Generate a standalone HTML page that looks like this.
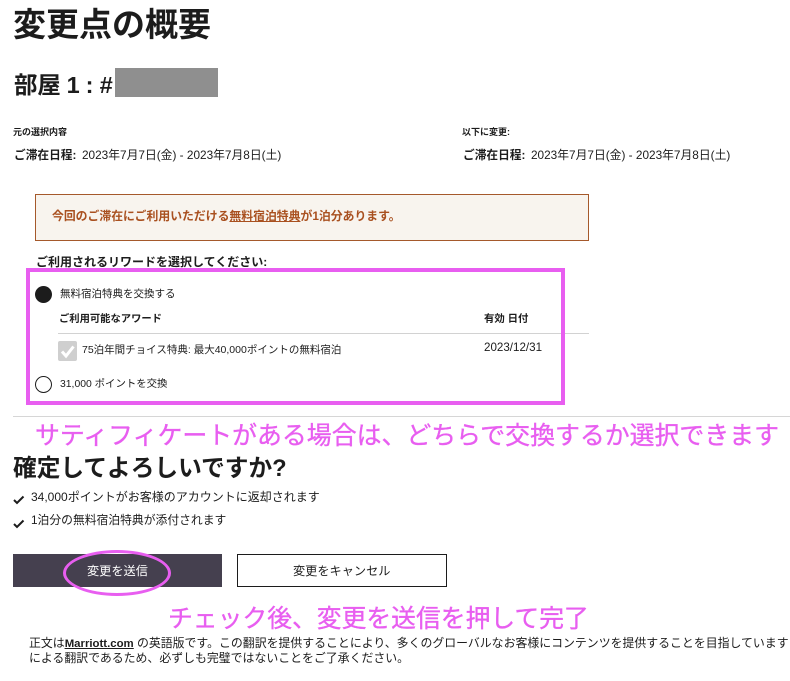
<!DOCTYPE html>
<html lang="ja">
<head>
<meta charset="utf-8">
<title>変更点の概要</title>
<style>
html,body{margin:0;padding:0;background:#fff}
body{position:relative;width:790px;height:681px;overflow:hidden;font-family:"Liberation Sans","Noto Sans CJK JP",sans-serif;color:#1c1c1c}
.t{position:absolute;white-space:nowrap;line-height:1;margin:0;font-weight:400}
.b{font-weight:700}
.box{position:absolute;box-sizing:border-box}
.pink{color:#e85ef0;-webkit-text-stroke:.35px #e85ef0}
a{color:inherit}
</style>
</head>
<body>
<h1 class="t b" style="left:13px;top:8px;font-size:33px">変更点の概要</h1>
<h2 class="t b" style="left:14px;top:74px;font-size:23.5px;letter-spacing:-.3px">部屋 1 : <i>#</i></h2>
<div class="box" style="left:115px;top:68px;width:103px;height:29px;background:#8f8f8f"></div>

<div class="t b" style="left:13px;top:128px;font-size:9px">元の選択内容</div>
<div class="t b" style="left:14px;top:150px;font-size:11.7px">ご滞在日程:</div>
<div class="t" style="left:82px;top:150px;font-size:11.8px">2023年7月7日(金) - 2023年7月8日(土)</div>
<div class="t b" style="left:462px;top:128px;font-size:9px">以下に変更:</div>
<div class="t b" style="left:463px;top:150px;font-size:11.7px">ご滞在日程:</div>
<div class="t" style="left:531px;top:150px;font-size:11.8px">2023年7月7日(金) - 2023年7月8日(土)</div>

<div class="box" style="left:35px;top:194px;width:554px;height:47px;background:#f8f4ee;border:1px solid #a5592b"></div>
<div class="t b" style="left:52px;top:211px;font-size:11.85px;color:#a9501f">今回のご滞在にご利用いただける<u>無料宿泊特典</u>が1泊分あります。</div>

<div class="t b" style="left:36px;top:256px;font-size:12px">ご利用されるリワードを選択してください:</div>

<div class="box" style="left:58px;top:333px;width:531px;height:1px;background:#d2d2d2"></div>
<div class="box" style="left:26px;top:268px;width:539px;height:137px;border:4px solid #e85ef0"></div>

<div class="box" style="left:35px;top:286px;width:17px;height:17px;border-radius:50%;background:#1c1c1c"></div>
<div class="t" style="left:60px;top:289px;font-size:10.5px">無料宿泊特典を交換する</div>
<div class="t b" style="left:59px;top:315px;font-size:10.3px">ご利用可能なアワード</div>
<div class="t b" style="left:484px;top:315px;font-size:10.4px">有効 日付</div>

<div class="box" style="left:58px;top:341px;width:19px;height:20px;border-radius:2px;background:#cfcfcf"></div>
<svg class="box" style="left:58px;top:341px" width="19" height="20" viewBox="0 0 19 20"><path d="M4 10.5 8 15 15.5 5.5" fill="none" stroke="#fff" stroke-width="3"/></svg>
<div class="t" style="left:82px;top:345px;font-size:10.5px">75泊年間チョイス特典: 最大40,000ポイントの無料宿泊</div>
<div class="t" style="left:484px;top:342px;font-size:11.6px">2023/12/31</div>

<div class="box" style="left:35px;top:376px;width:17px;height:17px;border-radius:50%;background:#fff;border:1.3px solid #1c1c1c"></div>
<div class="t" style="left:60px;top:380px;font-size:10.4px">31,000 ポイントを交換</div>

<div class="box" style="left:13px;top:416px;width:777px;height:1px;background:#d6d6d6"></div>

<div class="t pink" style="left:35px;top:424px;font-size:24.9px">サティフィケートがある場合は、どちらで交換するか選択できます</div>

<div class="t b" style="left:13px;top:458px;font-size:23.7px">確定してよろしいですか?</div>

<svg class="box" style="left:13px;top:495px" width="12" height="10" viewBox="0 0 12 10"><path d="M1 5 4 8 10.5 1.5" fill="none" stroke="#1c1c1c" stroke-width="2"/></svg>
<div class="t" style="left:31px;top:491px;font-size:12px">34,000ポイントがお客様のアカウントに返却されます</div>
<svg class="box" style="left:13px;top:519px" width="12" height="10" viewBox="0 0 12 10"><path d="M1 5 4 8 10.5 1.5" fill="none" stroke="#1c1c1c" stroke-width="2"/></svg>
<div class="t" style="left:31px;top:515px;font-size:11.8px">1泊分の無料宿泊特典が添付されます</div>

<div class="box" style="left:13px;top:554px;width:209px;height:33px;background:#45404f"></div>
<div class="t" style="left:87px;top:565px;font-size:12.2px;color:#fff">変更を送信</div>
<div class="box" style="left:63px;top:550px;width:108px;height:46px;border:3.5px solid #e85ef0;border-radius:50%"></div>

<div class="box" style="left:237px;top:554px;width:210px;height:33px;border:1px solid #1c1c1c;background:#fff"></div>
<div class="t" style="left:293px;top:565px;font-size:12.2px">変更をキャンセル</div>

<div class="t pink" style="left:168px;top:608px;font-size:24.8px">チェック後、変更を送信を押して完了</div>

<div class="t" style="left:29px;top:638px;font-size:11.9px">正文は<a href="#"><u class="b" style="font-size:11.4px">Marriott.com</u></a> の英語版です。この翻訳を提供することにより、多くのグローバルなお客様にコンテンツを提供することを目指しています</div>
<div class="t" style="left:29px;top:653px;font-size:11.9px">による翻訳であるため、必ずしも完璧ではないことをご了承ください。</div>
</body>
</html>
